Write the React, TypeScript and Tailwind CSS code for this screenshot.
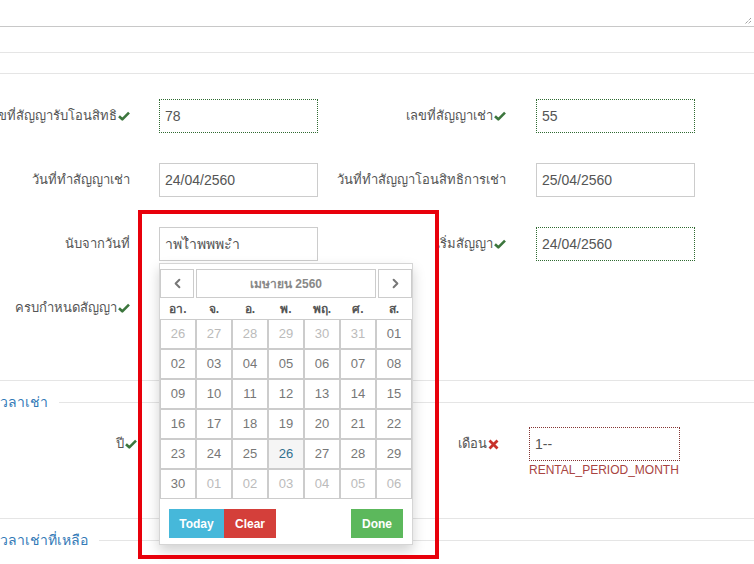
import React from 'react';
import { ChevronLeft, ChevronRight } from 'lucide-react';

const Ok = () => (
    <svg width="12" height="10" viewBox="0 0 12 10" className="ml-[1px] shrink-0">
        <path d="M1 5.2 L4.3 8.3 L11 1.6" fill="none" stroke="#3c763d" strokeWidth="2.6" strokeLinejoin="round" />
    </svg>
);

const Bad = () => (
    <svg width="11" height="11" viewBox="0 0 11 11" className="ml-[1px] shrink-0">
        <path d="M1.5 1.5 L9.5 9.5 M9.5 1.5 L1.5 9.5" stroke="#c7312b" strokeWidth="2.8" />
    </svg>
);

const Label: React.FC<{ text: string; w: string; icon?: React.ReactNode }> = ({ text, w, icon }) => (
    <div className={`${w} h-full flex items-center justify-end overflow-hidden whitespace-nowrap text-[13px] text-[#555]`}>
        <span className="shrink-0">{text}</span>
        {icon}
    </div>
);

const Field: React.FC<{ value: string; tone?: 'ok' | 'bad' | 'plain'; w?: string }> = ({ value, tone = 'plain', w = 'w-[159px]' }) => {
    const border =
        tone === 'ok'
            ? 'border border-dotted border-[#2f6a31]'
            : tone === 'bad'
            ? 'border border-dotted border-[#843534]'
            : 'border border-[#cccccc]';
    return (
        <div className={`${w} h-[34px] ${border} flex items-center px-[5px] text-[14px] text-[#555] whitespace-nowrap overflow-hidden`}>
            {value}
        </div>
    );
};

const Legend: React.FC<{ text: string }> = ({ text }) => (
    <div className="h-[42px] flex items-center">
        <span className="text-[14px] text-[#337ab7] whitespace-nowrap">{text}</span>
        <div className="flex-1 h-px bg-[#e5e5e5] ml-[11px]" />
    </div>
);

const days: { d: string; muted?: boolean; today?: boolean }[] = [
    ...['26', '27', '28', '29', '30', '31'].map(d => ({ d, muted: true })),
    ...Array.from({ length: 30 }, (_, i) => ({ d: String(i + 1).padStart(2, '0'), today: i + 1 === 26 })),
    ...['01', '02', '03', '04', '05', '06'].map(d => ({ d, muted: true })),
];

const DatePicker = () => (
    <div className="absolute left-[159px] top-[263px] w-[254px] h-[282px] bg-white border border-[#d5d5d5] shadow-[0_6px_12px_rgba(0,0,0,0.18)] pt-[5px]">
        <div className="flex h-[29px]">
            <div className="w-[34px] border border-[#cccccc] flex items-center justify-center text-[#777]">
                <ChevronLeft size={15} strokeWidth={3.2} />
            </div>
            <div className="w-[180px] ml-[2px] border border-[#cccccc] flex items-center justify-center text-[12px] font-bold text-[#888]">
                เมษายน 2560
            </div>
            <div className="w-[34px] ml-[2px] border border-[#cccccc] flex items-center justify-center text-[#777]">
                <ChevronRight size={15} strokeWidth={3.2} />
            </div>
        </div>
        <div className="grid grid-cols-7 h-[21px] items-center text-center text-[12px] font-bold text-[#555]">
            {['อา.', 'จ.', 'อ.', 'พ.', 'พฤ.', 'ศ.', 'ส.'].map(n => (
                <span key={n}>{n}</span>
            ))}
        </div>
        <div className="grid grid-cols-7">
            {days.map((c, i) => (
                <div
                    key={i}
                    className={`h-[30px] border border-[#cccccc] flex items-center justify-center text-[13px] ${
                        c.today ? 'bg-[#f5f5f5] text-[#31708f]' : c.muted ? 'text-[#bbbbbb]' : 'text-[#777]'
                    }`}
                >
                    {c.d}
                </div>
            ))}
        </div>
        <div className="flex items-center justify-between px-[9px] pt-[10px]">
            <div className="flex">
                <div className="w-[55px] h-[29px] bg-[#46b8da] text-white text-[12px] font-bold flex items-center justify-center">Today</div>
                <div className="w-[52px] h-[29px] bg-[#d43f3a] text-white text-[12px] font-bold flex items-center justify-center">Clear</div>
            </div>
            <div className="w-[52px] h-[29px] bg-[#5cb85c] text-white text-[12px] font-bold flex items-center justify-center">Done</div>
        </div>
    </div>
);

export default function App() {
    return (
        <div className="relative w-[754px] h-[564px] overflow-hidden bg-white font-['Liberation_Sans','Noto_Sans',sans-serif]">
            <div className="relative h-[27px] border-b border-[#c8c8c8]">
                <svg width="8" height="8" viewBox="0 0 8 8" className="absolute right-[2px] bottom-[1px]">
                    <path d="M7 1 L1 7 M7 4 L4 7" stroke="#777" strokeWidth="1" strokeDasharray="1 1" />
                </svg>
            </div>
            <div className="h-[26px] border-b border-[#e5e5e5]" />
            <div className="h-[21px] border-b border-[#e5e5e5]" />

            <div className="pt-[25px] flex flex-col gap-[30px]">
                <div className="flex h-[34px]">
                    <Label w="w-[130px]" text="เลขที่สัญญารับโอนสิทธิ" icon={<Ok />} />
                    <div className="ml-[29px]"><Field value="78" tone="ok" /></div>
                    <Label w="w-[188px]" text="เลขที่สัญญาเช่า" icon={<Ok />} />
                    <div className="ml-[30px]"><Field value="55" tone="ok" /></div>
                </div>
                <div className="flex h-[34px]">
                    <Label w="w-[130px]" text="วันที่ทำสัญญาเช่า" />
                    <div className="ml-[29px]"><Field value="24/04/2560" /></div>
                    <Label w="w-[188px]" text="วันที่ทำสัญญาโอนสิทธิการเช่า" />
                    <div className="ml-[30px]"><Field value="25/04/2560" /></div>
                </div>
                <div className="flex h-[34px]">
                    <Label w="w-[130px]" text="นับจากวันที่" />
                    <div className="ml-[29px]"><Field value="าพไำพพพะำ" /></div>
                    <Label w="w-[188px]" text="เริ่มสัญญา" icon={<Ok />} />
                    <div className="ml-[30px]"><Field value="24/04/2560" tone="ok" /></div>
                </div>
                <div className="flex h-[34px]">
                    <Label w="w-[130px]" text="ครบกำหนดสัญญา" icon={<Ok />} />
                    <div className="ml-[29px]"><Field value="" tone="ok" /></div>
                </div>
            </div>

            <div className="mt-[55px] border-t border-[#e5e5e5]" />
            <Legend text="วลาเช่า" />

            <div className="mt-[4px] flex">
                <div className="h-[34px] flex">
                    <Label w="w-[137px]" text="ปี" icon={<Ok />} />
                    <Label w="w-[362px]" text="เดือน" icon={<Bad />} />
                </div>
                <div className="ml-[30px] flex flex-col">
                    <Field value="1--" tone="bad" w="w-[151px]" />
                    <span className="mt-[1px] text-[12px] text-[#a94442] leading-[16px]">RENTAL_PERIOD_MONTH</span>
                </div>
            </div>

            <div className="mt-[40px] border-t border-[#e5e5e5]" />
            <Legend text="วลาเช่าที่เหลือ" />

            <DatePicker />

            <div className="absolute left-[138px] top-[210px] w-[301px] h-[349px] border-[4px] border-[#e8000b]" />
        </div>
    );
}
